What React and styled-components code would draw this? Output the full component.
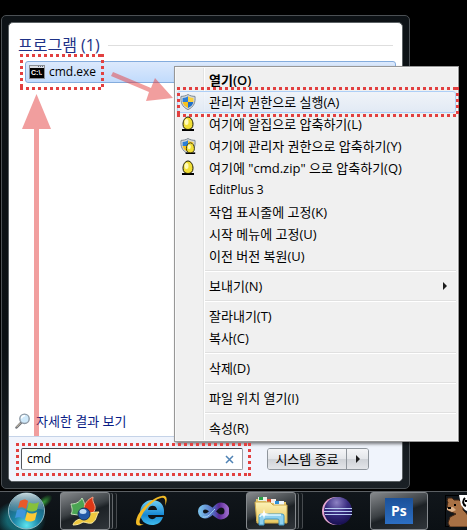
import React, { useState } from "react";
import styled, { createGlobalStyle, css } from "styled-components";

const menuItems = [
  { label: "열기", hotkey: "O", bold: true },
  { label: "관리자 권한으로 실행", hotkey: "A", icon: "shield", active: true },
  { label: "여기에 알집으로 압축하기", hotkey: "L", icon: "egg" },
  { label: "여기에 관리자 권한으로 압축하기", hotkey: "Y", icon: "shieldEgg" },
  { label: '여기에 "cmd.zip" 으로 압축하기', hotkey: "Q", icon: "egg" },
  { label: "EditPlus 3", latin: true },
  { label: "작업 표시줄에 고정", hotkey: "K" },
  { label: "시작 메뉴에 고정", hotkey: "U" },
  { label: "이전 버전 복원", hotkey: "U" },
  { separator: true },
  { label: "보내기", hotkey: "N", submenu: true },
  { separator: true },
  { label: "잘라내기", hotkey: "T" },
  { label: "복사", hotkey: "C" },
  { separator: true },
  { label: "삭제", hotkey: "D" },
  { separator: true },
  { label: "파일 위치 열기", hotkey: "I" },
  { separator: true },
  { label: "속성", hotkey: "R" },
];

function ConsoleIcon() {
  return (
    <svg width="16" height="14" viewBox="0 0 16 14">
      <rect width="16" height="14" fill="#8b8f94" />
      <rect x="1" y="1" width="14" height="2" fill="#d9dde2" />
      <path d="M9 1h1v1H9zM11 1h1v1h-1zM13 1h1v1h-1z" fill="#5d6a80" />
      <rect x="1" y="3" width="14" height="10" fill="#000" />
      <text x="2" y="10" fontFamily="Liberation Sans" fontWeight="700" fontSize="7" fill="#fff">
        C:\.
      </text>
    </svg>
  );
}

function ShieldShape() {
  return (
    <g>
      <path
        d="M8 .5C6 1.800 3.700 2.300 1 2.400.4 8 2 13 8 15.600 14 13 15.600 8 15 2.400 12.300 2.300 10 1.800 8 .5z"
        fill="#d4d8dc"
        stroke="#7e8a94"
        strokeWidth="1"
      />
      <path d="M8 2.300C6.500 3.300 5 3.800 2.600 4V8H8z" fill="#2c7fd6" />
      <path d="M8 2.300c1.500 1 3 1.500 5.400 1.700V8H8z" fill="#fbd13b" />
      <path d="M2.700 8H8v6C4.800 12.500 3 10.700 2.700 8z" fill="#f6c21f" />
      <path d="M13.300 8H8v6c3.200-1.500 5-3.300 5.300-6z" fill="#1f6fc8" />
    </g>
  );
}

function EggShape() {
  return (
    <g>
      <path d="M2 14h12" stroke="#000" strokeWidth="2" />
      <path
        d="M8 1C5.200 1 3 4.500 3 8.300 3 11.700 5 13.500 8 13.500s5-1.800 5-5.200C13 4.500 10.800 1 8 1z"
        fill="#f2df36"
        stroke="#1a1800"
        strokeWidth="1"
      />
      <ellipse cx="6.500" cy="6" rx="2" ry="3" fill="#fffbb8" />
    </g>
  );
}

function MenuIcon({ name }) {
  return (
    <svg width="16" height="16" viewBox="0 0 16 16">
      {name !== "egg" && <ShieldShape />}
      {name === "egg" && <EggShape />}
      {name === "shieldEgg" && (
        <g transform="translate(4 4) scale(.8)">
          <EggShape />
        </g>
      )}
    </svg>
  );
}

function SearchIcon() {
  return (
    <svg width="16" height="16" viewBox="0 0 16 16">
      <path d="M1.500 14.500 6 9.800" stroke="#6d7178" strokeWidth="2.500" strokeLinecap="round" />
      <path d="M1.500 14.200 5.500 10" stroke="#d8c9ae" strokeWidth="1" />
      <circle cx="9.500" cy="5.800" r="4.700" fill="#cfe9fa" stroke="#8e9aa6" strokeWidth="1.400" />
      <path d="M6.500 5.500a3 3 0 0 1 3.500-2.800" stroke="#fff" strokeWidth="1.500" fill="none" />
    </svg>
  );
}

function StartOrb() {
  return (
    <svg width="60" height="38" viewBox="0 0 60 38">
      <defs>
        <radialGradient id="orb" cx=".5" cy=".9" r=".9">
          <stop offset="0" stopColor="#5de4ee" />
          <stop offset=".4" stopColor="#1b86a8" />
          <stop offset="1" stopColor="#204b62" />
        </radialGradient>
        <linearGradient id="orbShine" x2="0" y2="1">
          <stop offset="0" stopColor="#e4f0f2" stopOpacity=".85" />
          <stop offset="1" stopColor="#7fa8b8" stopOpacity=".25" />
        </linearGradient>
        <radialGradient id="orbGlow">
          <stop offset=".5" stopColor="#1b9cab" stopOpacity=".6" />
          <stop offset="1" stopColor="#1b9cab" stopOpacity="0" />
        </radialGradient>
        <radialGradient id="greenGlow">
          <stop offset="0" stopColor="#3ab83c" stopOpacity=".8" />
          <stop offset="1" stopColor="#3ab83c" stopOpacity="0" />
        </radialGradient>
      </defs>
      <ellipse cx="20" cy="28" rx="26" ry="20" fill="url(#orbGlow)" />
      <ellipse cx="44" cy="10" rx="10" ry="5" fill="url(#greenGlow)" transform="rotate(-40 44 10)" />
      <circle cx="26.500" cy="19" r="18" fill="url(#orb)" stroke="#91b8c3" />
      <path d="M9.500 18a17 17 0 0 1 34 0c-9-4-24 5-34 0z" fill="url(#orbShine)" />
      <path d="M20 9c3-2 6-2 8 0l-2 8c-3-2-5-2-8-1z" fill="#e8592a" />
      <path d="M29 10c3 2 6 2 10 0l-2 8c-4 2-7 2-10 0z" fill="#87c13b" />
      <path d="M17 18c3-1 6-1 9 1l-2 8c-3-2-6-2-9-1z" fill="#3f96dc" />
      <path d="M27 20c3 2 6 2 10 0l-2 8c-4 2-7 2-10 0z" fill="#fbc936" />
    </svg>
  );
}

function LeavesIcon() {
  return (
    <svg width="32" height="32" viewBox="0 0 32 32">
      <path d="M2 9c4 0 8-1 11-6 3 5 4 10 2 16l-6 1-7-1c2-3 1-6 0-10z" fill="#4ba553" stroke="#c3e0b9" />
      <path d="M15 14c0-5 4-10 9-12-1 4 1 6 2 9 1 5-3 9-7 10z" fill="#df3817" stroke="#f6a184" />
      <path
        d="M4 30c1-4 5-6 9-6 3-5 8-7 17-7-3 3-2 8-7 11-4 1-6-1-9-1-3 2-6 3-10 3z"
        fill="#eec83e"
        stroke="#fbeaa0"
      />
      <circle cx="15" cy="19" r="6" fill="#2459a7" stroke="#17345f" />
      <ellipse cx="14" cy="16.500" rx="3.500" ry="2.500" fill="#c1dbf4" />
    </svg>
  );
}

function ExplorerIcon() {
  return (
    <svg width="34" height="34" viewBox="0 0 34 34">
      <defs>
        <linearGradient id="ie" x2="0" y2="1">
          <stop offset="0" stopColor="#72d0f6" />
          <stop offset=".6" stopColor="#1688d3" />
          <stop offset="1" stopColor="#41bceb" />
        </linearGradient>
      </defs>
      <path
        d="M30 17v4H14c0 4 5 6 8 2h7c-2 6-6 8-11 8-7 0-12-5-12-12S11 6 18 6s12 4 12 11zM14 16h9c0-5-8-6-9 0z"
        fill="url(#ie)"
        fillRule="evenodd"
      />
      <path
        d="M31 12c3-7 2-11-3-10C20 3 9 12 4 21c-4 9-2 13 6 9-4 1-6-1-3-7C11 14 21 5 27 4c4-1 5 2 4 8z"
        fill="#f2ba25"
      />
    </svg>
  );
}

function InfinityIcon() {
  return (
    <svg width="32" height="18" viewBox="0 0 32 18">
      <defs>
        <linearGradient id="vs">
          <stop offset="0" stopColor="#78bce8" />
          <stop offset=".5" stopColor="#5165bd" />
          <stop offset=".7" stopColor="#5b2796" />
          <stop offset="1" stopColor="#9867c7" />
        </linearGradient>
      </defs>
      <path
        d="M16 10C13 6 11 5 8 5a4.500 4.500 0 0 0 0 9c4 0 6-3 8-5s4-6 8-6a6 6 0 0 1 0 12c-3 0-5-2-8-5z"
        fill="none"
        stroke="url(#vs)"
        strokeWidth="5"
      />
      <path d="M6 15c5 1 8-4 12-8" stroke="#a5d9f4" fill="none" />
    </svg>
  );
}

function FolderIcon() {
  return (
    <svg width="34" height="32" viewBox="0 0 34 32">
      <defs>
        <linearGradient id="folder" x2="0" y2="1">
          <stop offset="0" stopColor="#fdf2b6" />
          <stop offset="1" stopColor="#e7c862" />
        </linearGradient>
      </defs>
      <path d="M2 4h11l2 3h17v19H2z" fill="#e3c66b" />
      <path d="M4 2h9v4H4z" fill="#e9f1e7" />
      <path d="M5 2h4v3H5z" fill="#28a045" />
      <path d="M12 4h10v4H12z" fill="#f5ece6" />
      <path d="M13 4h4v3h-4z" fill="#d64b2b" />
      <path d="M20 6h10v4H20z" fill="#eef5fa" />
      <path d="M21 6h4v3h-4z" fill="#2f92d8" />
      <path d="M1 7h15l3 3h14v18H3z" fill="url(#folder)" stroke="#cda94b" />
      <path
        d="M5 30V21q0-2 2-2h21q2 0 2 2v9h-5v-5q0-1-2-1H12q-2 0-2 1v5z"
        fill="#8ed0ee"
        stroke="#3e97c5"
      />
      <path d="M6 22q0-2 2-2h19" stroke="#e2f7ff" strokeWidth="1.500" fill="none" />
      <path d="m10 14 1 4 4 1-4 1-1 4-1-4-4-1 4-1z" fill="#fff" />
    </svg>
  );
}

function EclipseIcon() {
  return (
    <svg width="30" height="30" viewBox="0 0 30 30">
      <defs>
        <radialGradient id="eclipse" cx=".45" cy=".2" r=".8">
          <stop offset="0" stopColor="#8d82c4" />
          <stop offset=".5" stopColor="#392c80" />
          <stop offset="1" stopColor="#170f50" />
        </radialGradient>
      </defs>
      <circle cx="14" cy="15" r="14" fill="#e5a7cf" />
      <circle cx="16" cy="15" r="14" fill="url(#eclipse)" />
      <path d="M3 12.500h27M2 15.500h28M3 18.500h27" stroke="#b8cdf2" strokeWidth="1.200" />
    </svg>
  );
}

function PhotoshopIcon() {
  return (
    <svg width="28" height="26" viewBox="0 0 28 26">
      <defs>
        <linearGradient id="ps" x2="0" y2="1">
          <stop offset="0" stopColor="#1b5199" />
          <stop offset="1" stopColor="#2c6ec2" />
        </linearGradient>
      </defs>
      <rect width="28" height="26" fill="url(#ps)" />
      <text x="6" y="18" fontFamily="Open Sans" fontWeight="700" fontSize="14" fill="#fff">
        Ps
      </text>
    </svg>
  );
}

function BearIcon() {
  return (
    <svg width="32" height="32" viewBox="0 0 32 32">
      <rect x=".5" y=".5" width="31" height="31" fill="#12171c" stroke="#000" />
      <path
        d="M2 6l1-3h4l2 2h5l4 4v6l3 3 6 8v6H5l-2-4 2-6 6-3-7-3-2-5 1-4z"
        fill="#a87145"
        stroke="#3f2413"
      />
      <path d="M2 13l6-1 3 3-4 2-5-2z" fill="#dcb28b" />
      <path d="M3 12h3v2H3zM9 9h2v2H9z" fill="#000" />
      <path d="M14 0h18v17h-8l-4-2-4-5z" fill="#fff" />
      <path d="M20 3c-3 3-2 7 1 8M20 6h3" stroke="#000" strokeWidth="2" fill="none" />
    </svg>
  );
}

function App() {
  const [query, setQuery] = useState("cmd");

  return (
    <Desktop>
      <GlobalStyle />
      <StartMenu>
        <Panel>
          <Results>
            <GroupTitle>
              <h2>프로그램 (1)</h2>
            </GroupTitle>
            <ResultRow type="button">
              <ConsoleIcon />
              cmd.exe
              <Highlight $inset="-8px auto -8px -6px" $width="84px" />
            </ResultRow>
            <MoreLink href="#more">
              <SearchIcon />
              자세한 결과 보기
            </MoreLink>
          </Results>
          <Footer>
            <SearchBox>
              <input
                aria-label="프로그램 및 파일 검색"
                value={query}
                onChange={(e) => setQuery(e.target.value)}
              />
              <button type="button" aria-label="지우기" onClick={() => setQuery("")}>
                <svg width="9" height="9" viewBox="0 0 9 9">
                  <path d="M1 1l7 7M8 1 1 8" stroke="#4f82b4" strokeWidth="1.500" />
                </svg>
              </button>
              <Highlight $inset="-6px -9px -7px -6px" />
            </SearchBox>
            <PowerGroup>
              <PowerButton type="button">시스템 종료</PowerButton>
              <PowerButton type="button" aria-label="종료 옵션" $narrow>
                <Triangle />
              </PowerButton>
            </PowerGroup>
          </Footer>
        </Panel>
      </StartMenu>

      <Taskbar>
        <OrbButton type="button" aria-label="시작">
          <StartOrb />
        </OrbButton>
        <Slot>
          <Task type="button" aria-label="Picasa" $open $stacked>
            <LeavesIcon />
          </Task>
        </Slot>
        <Slot>
          <Task type="button" aria-label="Internet Explorer">
            <ExplorerIcon />
          </Task>
        </Slot>
        <Slot>
          <Task type="button" aria-label="Visual Studio">
            <InfinityIcon />
          </Task>
        </Slot>
        <Slot>
          <Task type="button" aria-label="Windows 탐색기" $open $stacked>
            <FolderIcon />
          </Task>
        </Slot>
        <Slot>
          <Task type="button" aria-label="Eclipse">
            <EclipseIcon />
          </Task>
        </Slot>
        <Slot>
          <Task type="button" aria-label="Photoshop" $open>
            <PhotoshopIcon />
          </Task>
        </Slot>
        <Slot>
          <Task type="button" aria-label="곰">
            <BearIcon />
          </Task>
        </Slot>
      </Taskbar>

      <Arrows width="180" height="440" viewBox="0 0 180 440">
        <path d="M113 72l38 16 4-10 18 20-27 3 3-9-38-16z" />
        <path d="M36.500 94 51 129H39V436H34V129H22z" />
      </Arrows>

      <ContextMenu role="menu">
        {menuItems.map((item, index) =>
          item.separator ? (
            <Separator key={index} role="separator" />
          ) : (
            <li key={index} role="none">
              <MenuButton
                type="button"
                role="menuitem"
                $active={item.active}
                $bold={item.bold}
                $latin={item.latin}
              >
                <IconCell>{item.icon && <MenuIcon name={item.icon} />}</IconCell>
                {item.label}
                {item.hotkey && `(${item.hotkey})`}
                {item.submenu && <Triangle $right />}
                {item.active && <Highlight $inset="-5px -4px -5px -1px" />}
              </MenuButton>
            </li>
          )
        )}
      </ContextMenu>
    </Desktop>
  );
}
export default App;

const GlobalStyle = createGlobalStyle`
  * {
    box-sizing: border-box;
  }
  body {
    margin: 0;
    background: #000;
  }
  body, button, input {
    font-family: "Open Sans", "Noto Sans CJK KR", sans-serif;
    font-size: 13px;
    line-height: 20px;
    color: #000;
  }
  button {
    padding: 0;
    border: 0;
    background: none;
  }
  svg {
    display: block;
    flex: none;
  }
`;

const Desktop = styled.main`
  position: relative;
  display: flex;
  flex-direction: column;
  gap: 2px;
  min-height: 100vh;
  padding-top: 15px;
  overflow: hidden;
  background: #000;
`;

const StartMenu = styled.section`
  flex: 1;
  display: flex;
  margin: 0 57px 0 1px;
  padding: 6px;
  border: 1px solid #4b5054;
  border-radius: 5px;
  background: linear-gradient(#0d1216, #0b1013 70%, #1a2025);
`;

const Panel = styled.div`
  flex: 1;
  display: flex;
  flex-direction: column;
  min-width: 0;
  border: 1px solid #5c6265;
  border-radius: 5px;
  overflow: hidden;
  background: #fff;
`;

const Results = styled.div`
  flex: 1;
  display: flex;
  flex-direction: column;
  padding: 11px 6px 4px 6px;
`;

const GroupTitle = styled.div`
  display: flex;
  align-items: center;
  gap: 8px;
  height: 22px;
  margin: 0 3px 5px;
  h2 {
    margin: 0;
    font-size: 16px;
    font-weight: 400;
    color: #1e3287;
  }
  &::after {
    content: "";
    flex: 1;
    height: 1px;
    background: #dedede;
  }
`;

const ResultRow = styled.button`
  position: relative;
  display: flex;
  align-items: center;
  gap: 4px;
  height: 22px;
  margin-left: 10px;
  padding: 0 3px;
  border: 1px solid #84acdd;
  border-radius: 3px;
  background: linear-gradient(#dce9fc, #c1dbfc);
  font-size: 12px;
`;

const MoreLink = styled.a`
  display: flex;
  align-items: center;
  gap: 5px;
  margin-top: auto;
  height: 22px;
  color: #0a1c86;
  text-decoration: none;
`;

const Footer = styled.div`
  display: flex;
  align-items: center;
  gap: 24px;
  height: 45px;
  padding: 0 12px;
  border-top: 1px solid #c5d3e8;
  background: #f0f4fc;
`;

const SearchBox = styled.div`
  position: relative;
  display: flex;
  align-items: center;
  flex: 0 1 222px;
  height: 22px;
  padding: 0 8px 0 5px;
  border: 1px solid #9a9da3;
  border-top-color: #3d4046;
  border-left-color: #55585e;
  border-radius: 2px;
  background: #fff;
  input {
    flex: 1;
    min-width: 0;
    padding: 0;
    border: 0;
    outline: 0;
    background: none;
    font-size: 12px;
  }
`;

const PowerGroup = styled.div`
  display: flex;
  border: 1px solid #8f959c;
  border-radius: 3px;
  overflow: hidden;
`;

const PowerButton = styled.button`
  display: flex;
  align-items: center;
  justify-content: center;
  width: ${(props) => (props.$narrow ? "22px" : "78px")};
  height: 20px;
  white-space: nowrap;
  background: linear-gradient(#f4f5f7, #e4e6ea 48%, #cfd2d7 52%, #e3e5e9);
  & + & {
    border-left: 1px solid #8f959c;
  }
`;

const Triangle = styled.i`
  border: 4px solid transparent;
  border-left-color: #1c1c1c;
  border-right-width: 0;
  ${(props) =>
    props.$right &&
    css`
      margin-left: auto;
      margin-right: 8px;
    `}
`;

const dots = "#e24040 0 3px, transparent 3px 6px";

const Highlight = styled.span`
  position: absolute;
  z-index: 1;
  inset: ${(props) => props.$inset};
  width: ${(props) => props.$width || "auto"};
  pointer-events: none;
  background:
    repeating-linear-gradient(90deg, ${dots}) top / 100% 3px no-repeat,
    repeating-linear-gradient(90deg, ${dots}) bottom / 100% 3px no-repeat,
    repeating-linear-gradient(${dots}) left / 3px 100% no-repeat,
    repeating-linear-gradient(${dots}) right / 3px 100% no-repeat;
`;

const Arrows = styled.svg`
  position: absolute;
  top: 0;
  left: 0;
  pointer-events: none;
  fill: #e54040;
  opacity: 0.5;
`;

const ContextMenu = styled.ul`
  position: absolute;
  top: 66px;
  left: 174px;
  right: 8px;
  margin: 0;
  padding: 2px;
  list-style: none;
  border: 1px solid #979797;
  box-shadow: inset 0 0 0 1px #f8f8f8, 2px 2px 3px rgba(0, 0, 0, 0.5);
  background: linear-gradient(90deg, transparent 28px, #e2e3e3 28px 29px, #fff 29px 30px, transparent 30px)
    #f0f0f0;
`;

const MenuButton = styled.button`
  position: relative;
  display: flex;
  align-items: center;
  width: 100%;
  height: 22px;
  text-align: left;
  white-space: nowrap;
  border: 1px solid transparent;
  font-size: ${(props) => (props.$latin ? "12px" : "13px")};
  font-weight: ${(props) => (props.$bold ? 600 : 400)};
  ${(props) =>
    props.$active &&
    css`
      border-color: #aecff7;
      border-radius: 3px;
      background: linear-gradient(rgba(240, 244, 250, 0.8), rgba(222, 232, 246, 0.8));
    `}
`;

const IconCell = styled.span`
  flex: none;
  width: 31px;
  padding-left: 2px;
`;

const Separator = styled.li`
  height: 8px;
  margin-left: 28px;
  background: linear-gradient(transparent 3px, #e0e0e0 3px 4px, #fff 4px 5px, transparent 5px);
`;

const Taskbar = styled.nav`
  display: grid;
  grid-template-columns: 60px;
  grid-auto-flow: column;
  grid-auto-columns: 62px;
  height: 39px;
  overflow: hidden;
  border-top: 1px solid #5b5f63;
  background: linear-gradient(#11161b, #0b1014);
`;

const OrbButton = styled.button`
  height: 38px;
  overflow: hidden;
`;

const Slot = styled.div`
  display: flex;
`;

const Task = styled.button`
  display: flex;
  align-items: center;
  justify-content: center;
  width: ${(props) => (props.$stacked ? "50px" : "58px")};
  height: 38px;
  border-radius: 3px;
  ${(props) =>
    props.$open &&
    css`
      border: 1px solid #85898d;
      background: linear-gradient(160deg, #85888b, #3b4044 45%, #1c2125 55%, #30353a);
    `}
  ${(props) =>
    props.$stacked &&
    css`
      box-shadow: 3px 0 0 -1px #1b2024, 4px 0 0 -1px #63676b, 7px 0 0 -1px #14191d, 8px 0 0 -1px #474b4f;
    `}
`;
